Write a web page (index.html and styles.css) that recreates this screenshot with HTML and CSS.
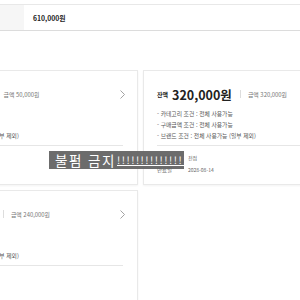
FILE: index.html
```html
<!DOCTYPE html>
<html lang="ko">
<head>
    <meta charset="UTF-8">
    <meta name="viewport" content="width=device-width, initial-scale=1.0">
    <title>상품권 내역</title>
    <link rel="stylesheet" href="styles.css">
</head>
<body>
    <div class="summary">
        <div class="summary-label"></div>
        <div class="summary-value">610,000원</div>
    </div>

    <div class="cards">
        <div class="card">
            <div class="card-head">
                <b class="balance-label">잔액</b><b class="balance-amount">50,000원</b>
                <span class="divider"></span>
                <span class="card-total">금액 50,000원</span>
                <svg class="chevron" width="5" height="9" viewBox="0 0 5 9"><polyline points="0.5,0.5 4.5,4.5 0.5,8.5" fill="none" stroke="#999" stroke-width="0.9"/></svg>
            </div>
            <ul class="card-rules">
                <li>- 카테고리 조건 : 전체 사용가능</li>
                <li>- 구매금액 조건 : 전체 사용가능</li>
                <li>- 브랜드 조건 : 전체 사용가능 (일부 제외)</li>
            </ul>
            <div class="card-info">
                <div class="info-row"><span class="info-label">사용처</span><span class="info-value">전점</span></div>
                <div class="info-row"><span class="info-label">만료일</span><span class="info-value">2028-08-14</span></div>
            </div>
        </div>

        <div class="card">
            <div class="card-head">
                <b class="balance-label">잔액</b><b class="balance-amount">320,000원</b>
                <span class="divider"></span>
                <span class="card-total">금액 320,000원</span>
                <svg class="chevron" width="5" height="9" viewBox="0 0 5 9"><polyline points="0.5,0.5 4.5,4.5 0.5,8.5" fill="none" stroke="#999" stroke-width="0.9"/></svg>
            </div>
            <ul class="card-rules">
                <li>- 카테고리 조건 : 전체 사용가능</li>
                <li>- 구매금액 조건 : 전체 사용가능</li>
                <li>- 브랜드 조건 : 전체 사용가능 (일부 제외)</li>
            </ul>
            <div class="card-info">
                <div class="info-row"><span class="info-label">사용처</span><span class="info-value">전점</span></div>
                <div class="info-row"><span class="info-label">만료일</span><span class="info-value">2028-08-14</span></div>
            </div>
        </div>

        <div class="card">
            <div class="card-head">
                <b class="balance-label">잔액</b><b class="balance-amount">240,000원</b>
                <span class="divider"></span>
                <span class="card-total">금액 240,000원</span>
                <svg class="chevron" width="5" height="9" viewBox="0 0 5 9"><polyline points="0.5,0.5 4.5,4.5 0.5,8.5" fill="none" stroke="#999" stroke-width="0.9"/></svg>
            </div>
            <ul class="card-rules">
                <li>- 카테고리 조건 : 전체 사용가능</li>
                <li>- 구매금액 조건 : 전체 사용가능</li>
                <li>- 브랜드 조건 : 전체 사용가능 (일부 제외)</li>
            </ul>
            <div class="card-info">
                <div class="info-row"><span class="info-label">사용처</span><span class="info-value">전점</span></div>
                <div class="info-row"><span class="info-label">만료일</span><span class="info-value">2028-08-14</span></div>
            </div>
        </div>
    </div>

    <div class="watermark">불펌 금지<span class="caret"></span><span class="bangs">!!!!!!!!!!!!!!!</span></div>
</body>
</html>
```

FILE: styles.css
```css
body {
    margin: 0;
    font-family: 'Noto Sans CJK KR', 'Noto Sans', sans-serif;
    background-color: #fff;
    color: #222;
    overflow: hidden;
}
.summary {
    display: flex;
    height: 25px;
    margin-top: 4px;
    border-top: 1px solid #e8e8e8;
    border-bottom: 1px solid #dcdcdc;
}
.summary-label {
    width: 24px;
    background-color: #f6f6f6;
}
.summary-value {
    padding-left: 9px;
    font-size: 6.8px;
    font-weight: bold;
    line-height: 26px;
}
.cards {
    display: grid;
    grid-template-columns: 232px 232px;
    gap: 5px;
    margin: 39px 0 0 -94px;
}
.card {
    height: 115px;
    box-sizing: border-box;
    border: 1px solid #e9e9e9;
    box-shadow: 0 1px 2px rgba(0, 0, 0, 0.05);
    padding: 14px 14px 0 13px;
}
.card-head {
    display: flex;
    align-items: center;
    height: 18px;
}
.balance-label {
    font-size: 6px;
    margin-right: 4px;
}
.balance-amount {
    font-size: 12.5px;
}
.divider {
    width: 1px;
    height: 8px;
    background-color: #ddd;
    margin: 0 7px 0 8px;
}
.card-total {
    font-size: 5.9px;
    color: #777;
}
.chevron {
    margin-left: auto;
    margin-right: -2px;
}
.card-rules {
    list-style: none;
    margin: 5px 0 0;
    padding: 0;
    font-size: 5.8px;
    line-height: 11px;
    color: #555;
}
.card-info {
    margin-top: 4px;
    border-top: 1px solid #e6e6e6;
    padding-top: 6px;
    line-height: 11px;
    color: #666;
}
.info-row {
    display: flex;
    align-items: baseline;
}
.info-label {
    width: 31px;
    font-size: 5.4px;
}
.info-value {
    font-size: 5px;
}
.watermark {
    position: absolute;
    left: 49px;
    top: 151px;
    width: 135px;
    height: 18px;
    box-sizing: border-box;
    padding-left: 6px;
    background-color: rgba(95, 95, 95, 0.92);
    color: #fff;
    font-size: 13.5px;
    line-height: 18px;
    letter-spacing: 1.5px;
    white-space: nowrap;
    overflow: hidden;
    display: flex;
    align-items: center;
}
.caret {
    width: 1px;
    height: 14px;
    background-color: #fff;
    margin: 0 1px 0 0;
}
.bangs {
    font-size: 10px;
    letter-spacing: 1.5px;
    text-decoration: underline;
}
```
